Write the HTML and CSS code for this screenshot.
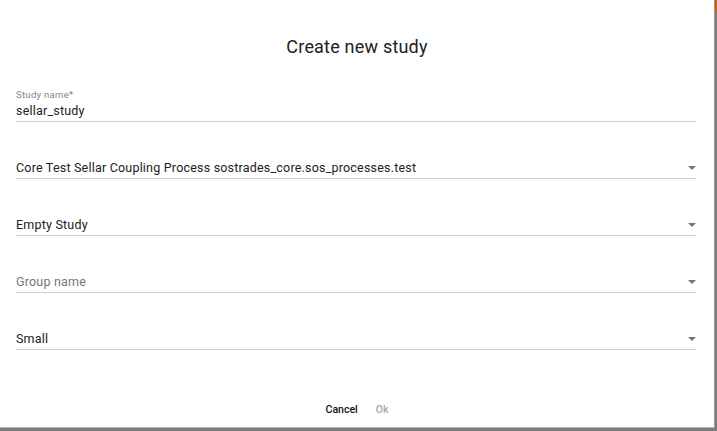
FILE: index.html
```html
<!DOCTYPE html>
<html>
<head>
<meta charset="utf-8">
<link rel="stylesheet" href="styles.css">
</head>
<body>
<div class="backdrop-accent"></div>
<div class="dialog">
  <h1 class="title">Create new study</h1>
  <div class="form">
    <div class="field text-field">
      <div class="label">Study name*</div>
      <div class="control"><span class="value">sellar_study</span></div>
    </div>
    <div class="field select">
      <div class="control"><span class="value">Core Test Sellar Coupling Process sostrades_core.sos_processes.test</span><span class="arrow"></span></div>
    </div>
    <div class="field select">
      <div class="control"><span class="value">Empty Study</span><span class="arrow"></span></div>
    </div>
    <div class="field select">
      <div class="control"><span class="value placeholder">Group name</span><span class="arrow"></span></div>
    </div>
    <div class="field select">
      <div class="control"><span class="value">Small</span><span class="arrow"></span></div>
    </div>
  </div>
  <div class="actions">
    <button class="btn primary">Cancel</button>
    <button class="btn disabled">Ok</button>
  </div>
</div>
</body>
</html>
```
FILE: styles.css
```css
html, body {
  margin: 0;
  padding: 0;
}
body {
  width: 717px;
  height: 431px;
  background: #7d7d7d;
  font-family: Roboto, "Liberation Sans", sans-serif;
  position: relative;
  overflow: hidden;
}
.backdrop-accent {
  position: absolute;
  right: 0;
  top: 0;
  width: 2px;
  height: 13px;
  background: #c0620f;
}
.dialog {
  width: 715px;
  height: 428px;
  background: #fff;
  box-sizing: border-box;
  border-right: 1px solid #9a9a9a;
  border-bottom: 1px solid #b5b5b5;
  display: flex;
  flex-direction: column;
}
.title {
  margin: 35px 0 0;
  font-size: 18px;
  line-height: 24px;
  font-weight: 400;
  color: #212121;
  text-align: center;
  letter-spacing: 0.2px;
}
.form {
  padding: 30px 18px 0 16px;
  display: flex;
  flex-direction: column;
  gap: 38px;
}
.label {
  font-size: 9.5px;
  line-height: 12px;
  color: #858585;
  font-weight: 400;
  letter-spacing: 0.3px;
  margin-bottom: 2px;
}
.control {
  display: flex;
  align-items: center;
  justify-content: space-between;
  border-bottom: 1px solid #cdcdcd;
  padding-bottom: 2px;
}
.value {
  font-size: 12.5px;
  line-height: 16px;
  color: #212121;
  letter-spacing: 0.2px;
}
.placeholder {
  color: #777;
}
.arrow {
  width: 0;
  height: 0;
  border-left: 4px solid transparent;
  border-right: 4px solid transparent;
  border-top: 4px solid #757575;
}
.actions {
  margin-top: auto;
  display: flex;
  justify-content: center;
  padding-bottom: 0;
}
.btn {
  background: none;
  border: none;
  font-family: Roboto, "Liberation Sans", sans-serif;
  font-size: 10.5px;
  font-weight: 500;
  line-height: 38px;
  height: 36px;
  padding: 0 9px;
  overflow: hidden;
}
.primary {
  color: #111;
}
.disabled {
  color: #a8a8a8;
}
```
